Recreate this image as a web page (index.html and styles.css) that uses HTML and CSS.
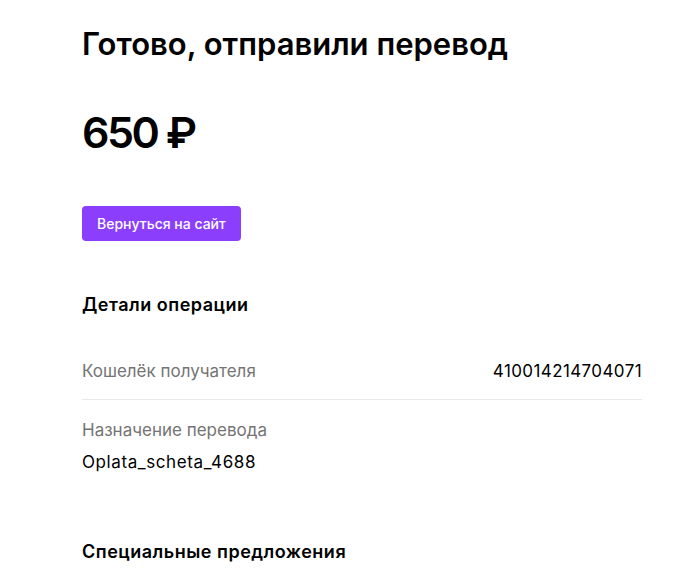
FILE: index.html
```html
<!DOCTYPE html>
<html lang="ru">
<head>
    <meta charset="UTF-8">
    <title>Перевод отправлен</title>
    <meta name="viewport" content="width=device-width, initial-scale=1">
    <link rel="stylesheet" href="styles.css">
</head>
<body>
    <div class="result-container">
        <h1 class="title">Готово, отправили перевод</h1>
        <div class="amount">650 ₽</div>
        <a href="#" class="btn">Вернуться на сайт</a>

        <h2 class="section-title">Детали операции</h2>
        <div class="detail-row">
            <span class="detail-label">Кошелёк получателя</span>
            <span class="detail-value">410014214704071</span>
        </div>
        <div class="detail-block">
            <div class="detail-label">Назначение перевода</div>
            <div class="detail-value">Oplata_scheta_4688</div>
        </div>

        <h2 class="section-title offers">Специальные предложения</h2>
    </div>
</body>
</html>
```

FILE: styles.css
```css
body {
    background: #fff;
    font-family: Inter, 'Noto Sans', Arial, sans-serif;
    margin: 0;
    color: #000;
}
.result-container {
    width: 560px;
    padding: 26px 0 0 82px;
}
.title {
    font-size: 31px;
    font-weight: 600;
    line-height: 36px;
    margin: 0;
}
.amount {
    font-size: 43px;
    font-weight: 600;
    line-height: 52px;
    letter-spacing: -2.5px;
    margin-top: 44px;
}
.btn {
    display: inline-block;
    margin-top: 48px;
    background: #8b3ffd;
    color: #fff;
    font-size: 14px;
    font-weight: 500;
    line-height: 35px;
    padding: 0 15px;
    border-radius: 4px;
    text-decoration: none;
}
.section-title {
    font-size: 18px;
    font-weight: 600;
    letter-spacing: 0.5px;
    margin: 52px 0 0 0;
    line-height: 24px;
}
.detail-row {
    display: flex;
    justify-content: space-between;
    align-items: center;
    margin-top: 42px;
    padding-bottom: 16px;
    border-bottom: 1px solid #e8e8e8;
    font-size: 17px;
    line-height: 24px;
}
.detail-label {
    color: #747474;
}
.detail-value {
    letter-spacing: 0.4px;
}
.detail-block {
    margin-top: 18px;
    font-size: 17px;
    line-height: 24px;
}
.detail-block .detail-value {
    margin-top: 8px;
    letter-spacing: 0.6px;
}
.offers {
    margin-top: 66px;
}
```
